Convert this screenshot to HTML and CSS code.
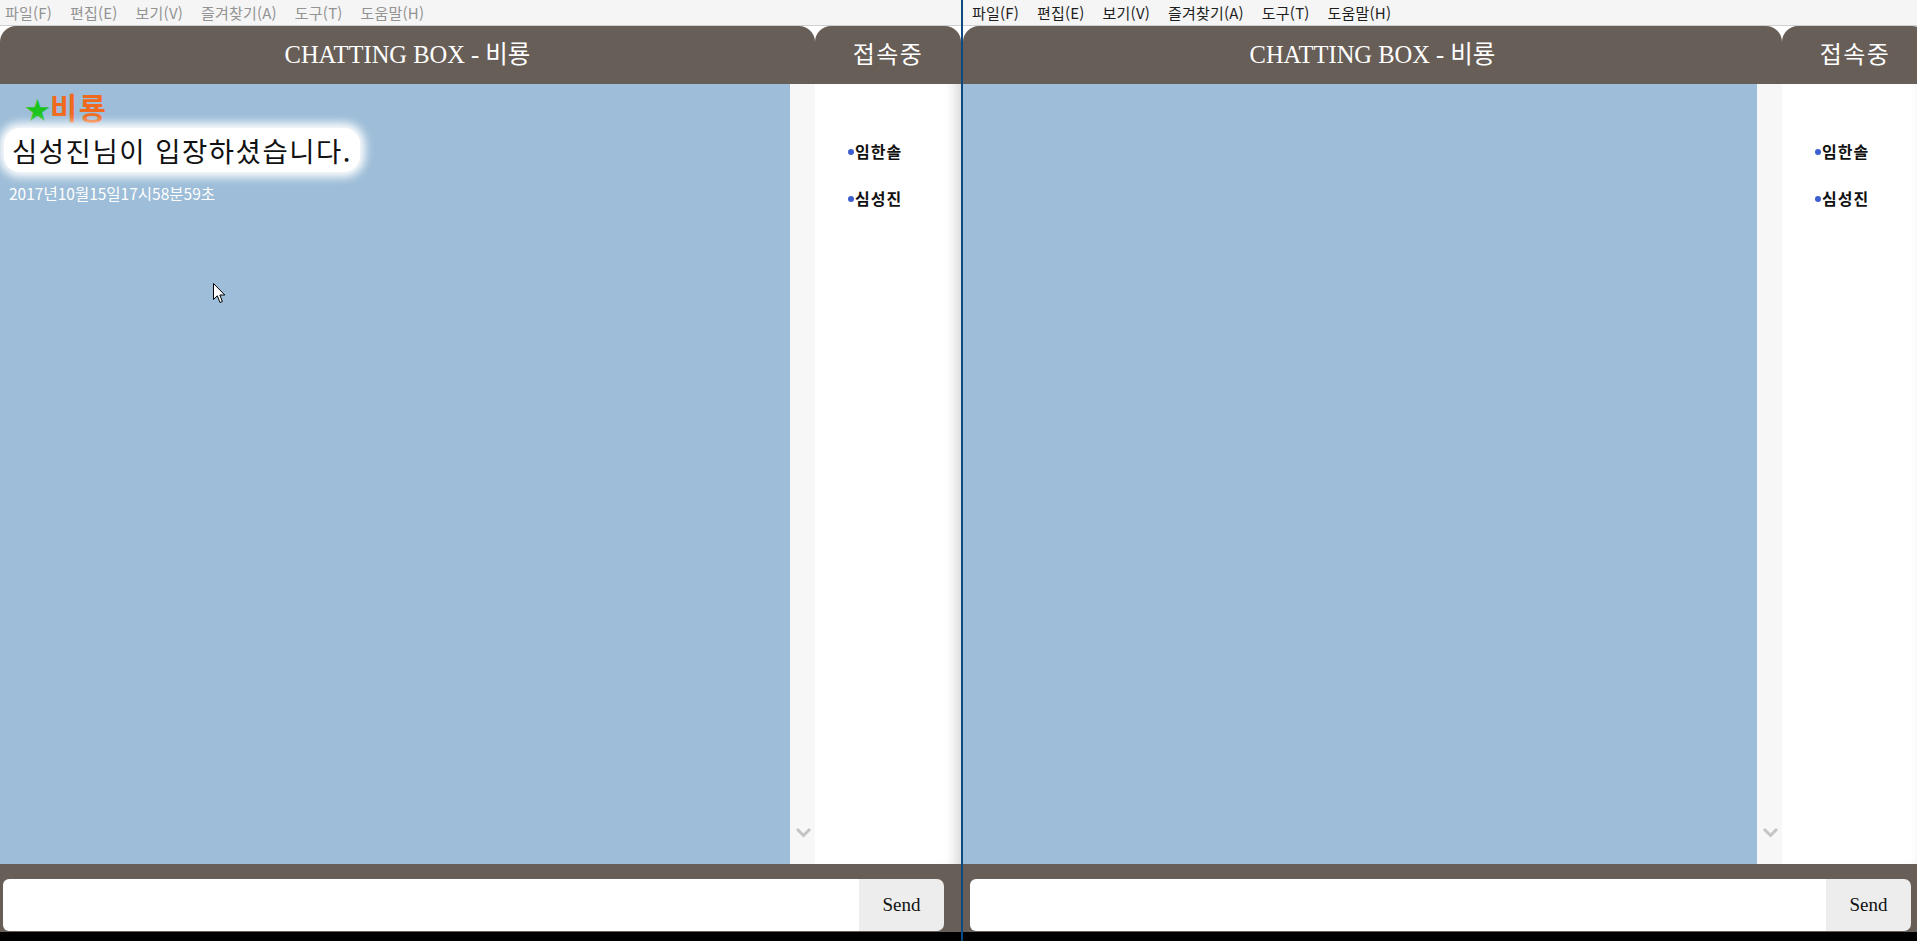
FILE: index.html
```html
<!DOCTYPE html>
<html lang="ko">
<head>
<meta charset="utf-8">
<title>CHATTING BOX</title>
<link rel="stylesheet" href="styles.css">
</head>
<body>
<div class="screen">
  <section class="pane pane-left">
    <nav class="menubar menubar-inactive">
      <span>파일(F)</span><span>편집(E)</span><span>보기(V)</span><span>즐겨찾기(A)</span><span>도구(T)</span><span>도움말(H)</span>
    </nav>
    <header class="header">
      <div class="title-tab">CHATTING BOX - 비룡</div>
      <div class="users-tab">접속중</div>
    </header>
    <div class="main">
      <div class="chat">
        <div class="msg-name"><span class="star">★</span>비룡</div>
        <div class="msg-text-wrap"><span class="msg-text">심성진님이 입장하셨습니다.</span></div>
        <div class="msg-time">2017년10월15일17시58분59초</div>
        <svg class="cursor" width="13" height="21" viewBox="0 0 13 21"><path d="M0.5 0.5 L0.5 16.5 L4.3 12.8 L7 19.5 L9.4 18.5 L6.8 12 L11.8 12 Z" fill="#fff" stroke="#000" stroke-width="1" stroke-linejoin="round"/></svg>
      </div>
      <div class="gutter">
        <svg class="chev" width="17" height="13" viewBox="0 0 17 13"><path d="M2 3 L8.5 9.5 L15 3" fill="none" stroke="#c4c4c4" stroke-width="3"/></svg>
      </div>
      <ul class="users">
        <li><span class="dot"></span>임한솔</li>
        <li><span class="dot"></span>심성진</li>
      </ul>
    </div>
    <footer class="footer">
      <div class="input"></div>
      <div class="send">Send</div>
    </footer>
  </section>
  <div class="divider"></div>
  <section class="pane pane-right">
    <div class="pane-inner">
      <nav class="menubar">
        <span>파일(F)</span><span>편집(E)</span><span>보기(V)</span><span>즐겨찾기(A)</span><span>도구(T)</span><span>도움말(H)</span>
      </nav>
      <header class="header">
        <div class="title-tab">CHATTING BOX - 비룡</div>
        <div class="users-tab">접속중</div>
      </header>
      <div class="main">
        <div class="chat"></div>
        <div class="gutter">
          <svg class="chev" width="17" height="13" viewBox="0 0 17 13"><path d="M2 3 L8.5 9.5 L15 3" fill="none" stroke="#c4c4c4" stroke-width="3"/></svg>
        </div>
        <ul class="users">
          <li><span class="dot"></span>임한솔</li>
          <li><span class="dot"></span>심성진</li>
        </ul>
      </div>
      <footer class="footer">
        <div class="input"></div>
        <div class="send">Send</div>
      </footer>
    </div>
  </section>
</div>
</body>
</html>
```

FILE: styles.css
```css
* { box-sizing: border-box; }
html, body { margin: 0; padding: 0; }
body {
  width: 1917px;
  height: 941px;
  overflow: hidden;
  background: #000;
  font-family: "Noto Sans CJK KR", "Noto Sans", sans-serif;
}
.screen {
  display: flex;
  height: 941px;
  background: #000;
}
.pane {
  --lead: 0px;
  height: 932px;
  background: #fff;
  display: flex;
  flex-direction: column;
}
.pane-left { width: 961px; flex: none; }
.pane-right {
  --lead: 4px;
  flex: 1;
  min-width: 0;
  overflow: hidden;
}
.pane-inner {
  width: 965px;
  height: 932px;
  display: flex;
  flex-direction: column;
}
.divider {
  width: 2px;
  flex: none;
  background: #0d4a82;
}
.menubar {
  height: 26px;
  flex: none;
  background: #f5f5f5;
  border-bottom: 1px solid #cfcfcf;
  display: flex;
  align-items: center;
  gap: 18px;
  padding-left: calc(5px + var(--lead));
  font-size: 15px;
  letter-spacing: 0.2px;
  color: #1e1e1e;
  white-space: nowrap;
}
.menubar-inactive { color: #939393; }
.header {
  height: 58px;
  flex: none;
  display: flex;
  background: #fff;
}
.title-tab {
  width: calc(815px + var(--lead));
  background: #675e57;
  border-radius: 16px 16px 0 0;
  color: #fff;
  font-family: "Liberation Serif", "Noto Sans CJK KR", serif;
  font-size: 24.5px;
  display: flex;
  align-items: center;
  justify-content: center;
  padding-bottom: 6px;
}
.users-tab {
  width: 146px;
  flex: none;
  background: #675e57;
  border-radius: 16px 16px 0 0;
  color: #fff;
  font-size: 24px;
  letter-spacing: 1.5px;
  display: flex;
  align-items: center;
  justify-content: center;
  padding-bottom: 6px;
}
.main {
  height: 780px;
  flex: none;
  display: flex;
}
.chat {
  position: relative;
  width: calc(790px + var(--lead));
  flex: none;
  background: #9dbdd8;
  padding-top: 6px;
}
.msg-name {
  margin-left: 25px;
  font-size: 29.5px;
  line-height: 32px;
  font-weight: bold;
  letter-spacing: 1.5px;
  color: #f0691c;
}
.star {
  color: #1ec41e;
  font-size: 25px;
  letter-spacing: 0;
}
.msg-text-wrap {
  margin-top: 4px;
  margin-left: 4px;
}
.msg-text {
  display: inline-block;
  background: #fff;
  padding: 4px 8px;
  border-radius: 16px;
  box-shadow: 0 0 10px 5px #fff;
  font-size: 27.5px;
  letter-spacing: 1.5px;
  line-height: 36px;
  color: #111;
}
.msg-time {
  margin-top: 11px;
  padding-left: 9px;
  font-size: 15.5px;
  line-height: 20px;
  color: #fff;
}
.cursor {
  position: absolute;
  left: 213px;
  top: 199px;
}
.gutter {
  width: 25px;
  flex: none;
  background: #f7f7f7;
  display: flex;
  flex-direction: column;
  justify-content: flex-end;
  padding-left: 5px;
  padding-bottom: 25px;
}
.users {
  width: 146px;
  flex: none;
  margin: 0;
  padding: 56px 0 0 33px;
  list-style: none;
  background: #fff;
  box-shadow: inset -14px 0 14px -10px rgba(0, 0, 0, 0.18);
}
.users li {
  display: flex;
  align-items: center;
  height: 22px;
  margin-bottom: 24.5px;
  font-size: 16px;
  font-weight: bold;
  letter-spacing: 1px;
  color: #111;
}
.dot {
  width: 6px;
  height: 6px;
  border-radius: 50%;
  background: #3c5fcf;
  margin-right: 1px;
  margin-top: 2px;
}
.footer {
  height: 68px;
  flex: none;
  background: #675e57;
  display: flex;
  padding: 15px 17px 1px calc(3px + var(--lead));
}
.input {
  flex: 1;
  background: #fff;
  border-radius: 6px 0 0 6px;
}
.send {
  width: 85px;
  flex: none;
  background: #ededed;
  border-radius: 0 7px 7px 0;
  font-family: "Liberation Serif", serif;
  font-size: 19px;
  color: #111;
  display: flex;
  align-items: center;
  justify-content: center;
}
```
